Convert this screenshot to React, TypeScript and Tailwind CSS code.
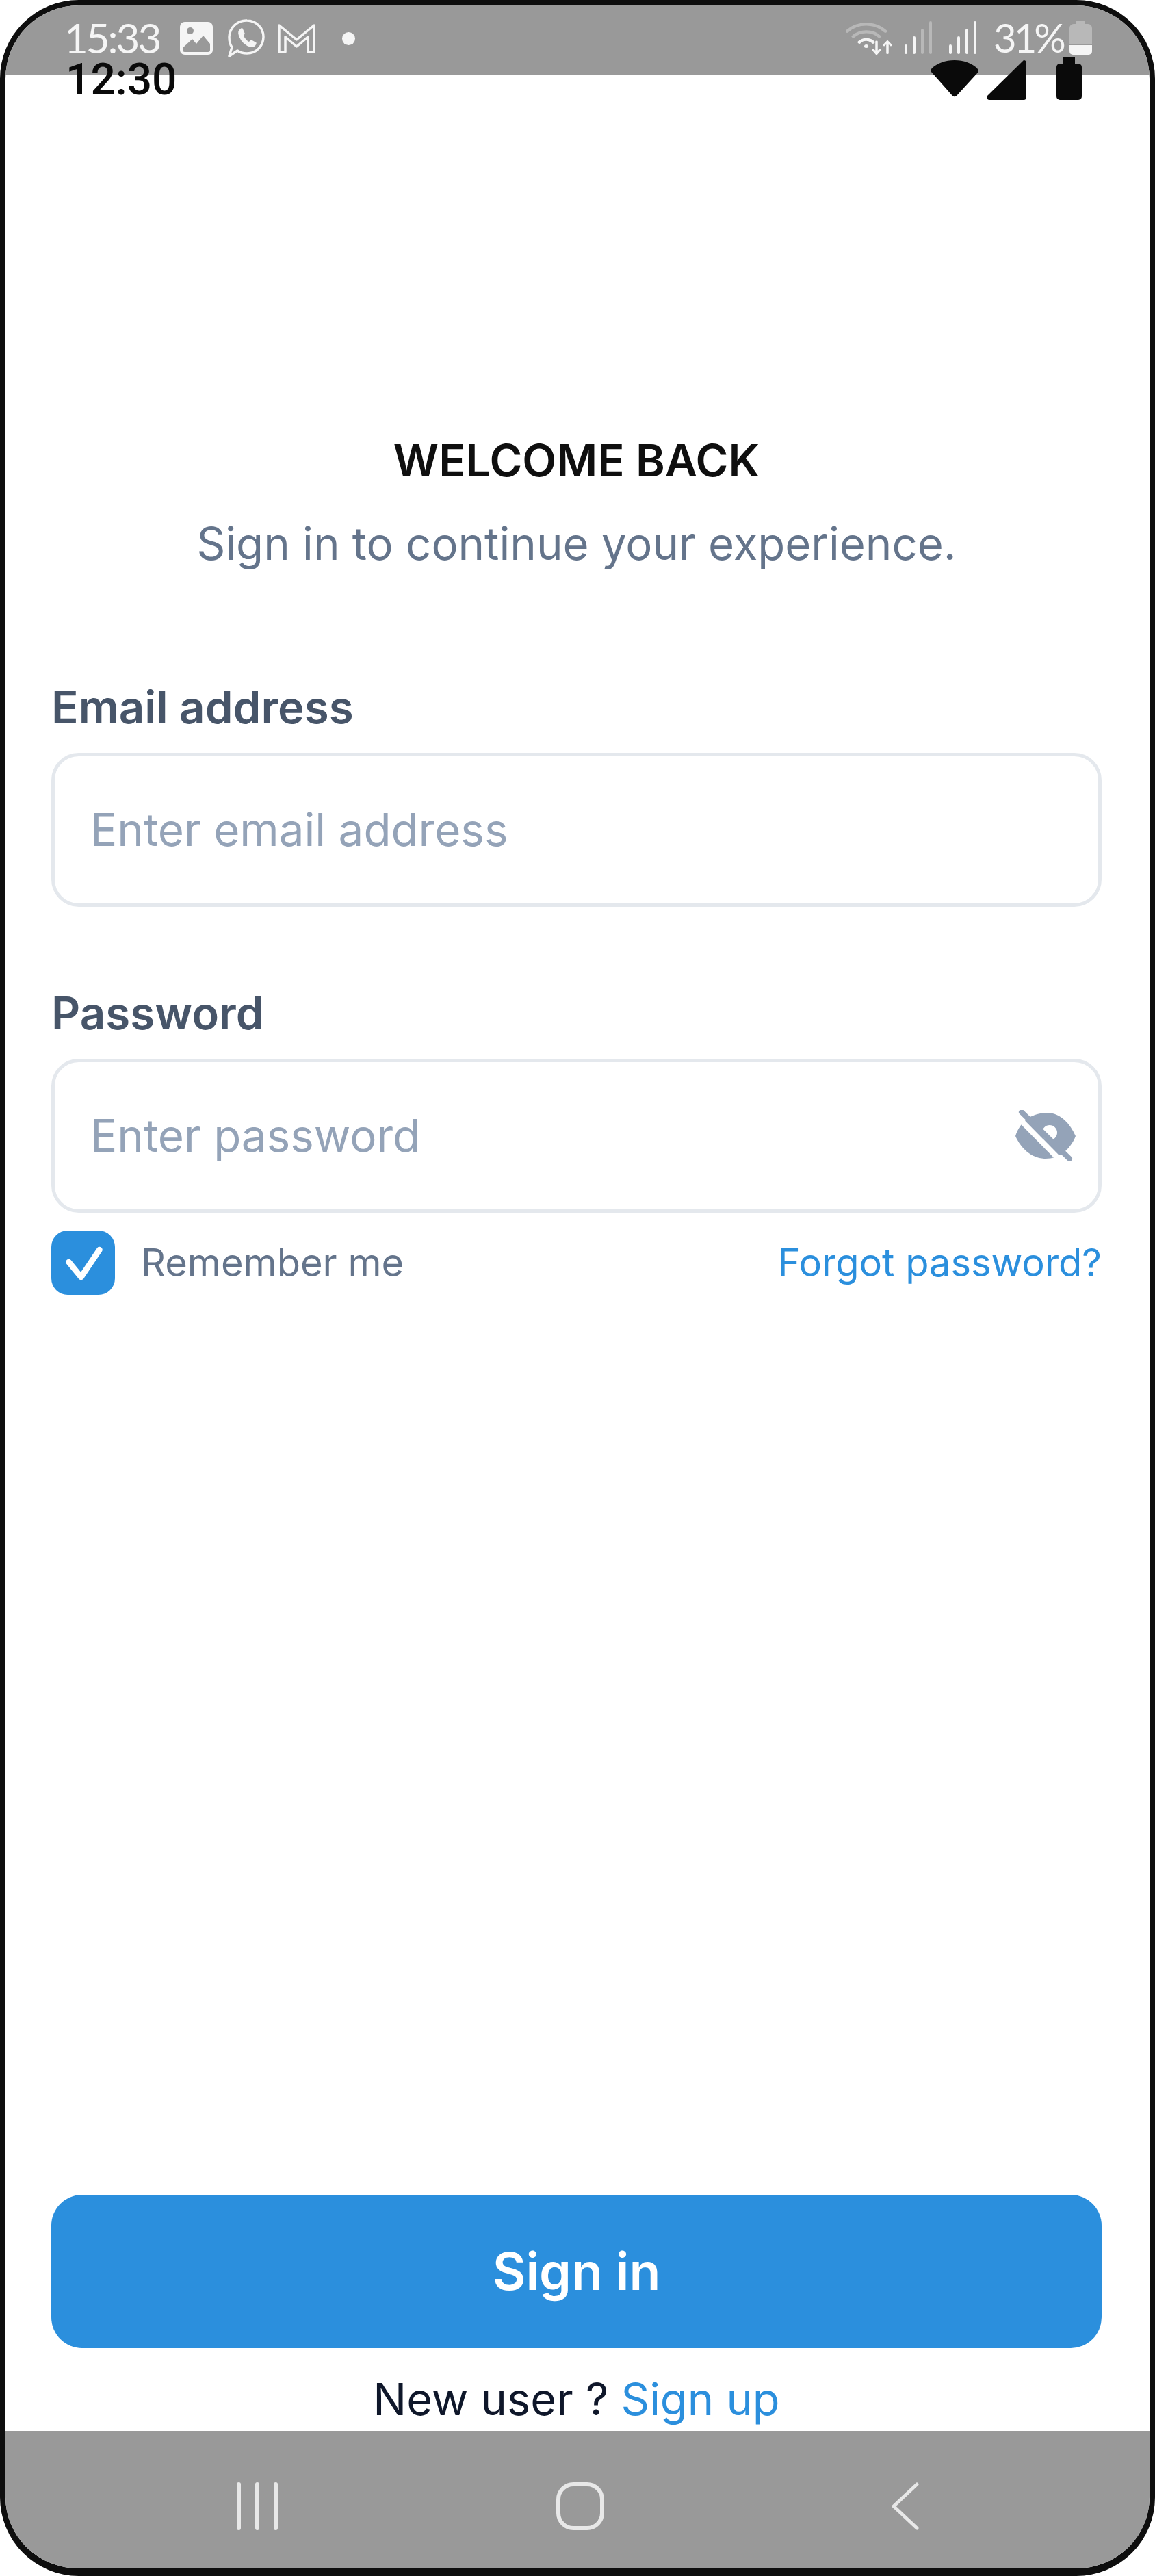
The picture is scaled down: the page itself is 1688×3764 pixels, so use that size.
function ImageIcon() {
  return (
    <svg viewBox="0 0 48 48" className="w-[48px] h-[48px]">
      <path fill="#f5f5f5" fillRule="evenodd" d="M7 0h34a7 7 0 0 1 7 7v34a7 7 0 0 1-7 7H7a7 7 0 0 1-7-7V7a7 7 0 0 1 7-7zM4 38v3a3 3 0 0 0 3 3h34a3 3 0 0 0 3-3v-9L34 20 24 32l-6-7z" />
      <circle cx="15" cy="13" r="5" fill="#999999" />
    </svg>
  );
}

function WhatsAppIcon() {
  return (
    <svg viewBox="0 0 54 56" className="w-[54px] h-[56px]" fill="none" stroke="#f5f5f5" strokeWidth="3.500" strokeLinejoin="round">
      <path d="M28 2a24 24 0 0 1 0 48c-5 0-10-1-14-4L2 54l4-13C3 37 2 31 2 26A25 25 0 0 1 28 2z" />
      <path fill="#f5f5f5" strokeWidth="1.500" d="M20 14c-4 2-5 6-3 11 3 7 9 13 16 15 4 1 7-1 8-5l-7-4-3 3c-4-2-7-6-9-10l2-3-3-7z" />
    </svg>
  );
}

function GmailIcon() {
  return (
    <svg viewBox="0 0 55 43" className="w-[55px] h-[43px]" fill="none" stroke="#f5f5f5" strokeWidth="3.500" strokeLinejoin="round">
      <path d="M2 41V2l25.500 21L53 2v39h-9V19L27.500 33 11 19v22z" />
    </svg>
  );
}

function WifiSmall() {
  return (
    <svg viewBox="0 0 75 62" preserveAspectRatio="none" className="w-[75px] h-[52px]" fill="none" strokeLinecap="round">
      <path d="M2 20a38 38 0 0 1 56 0" stroke="#b8b8b8" strokeWidth="5" />
      <path d="M11 29a26 26 0 0 1 38 0" stroke="#b8b8b8" strokeWidth="5" />
      <path d="M20 39a13 13 0 0 1 20 0" stroke="#f5f5f5" strokeWidth="5" />
      <circle cx="30" cy="46" r="3" fill="#f5f5f5" />
      <path d="M45 38v20M40 52l5 7 5-7M61 58V38M56 44l5-6 5 6" stroke="#f5f5f5" strokeWidth="3.500" />
    </svg>
  );
}

function SignalBars({ dim }: { dim: boolean }) {
  return (
    <svg viewBox="0 0 42 48" className="w-[42px] h-[48px]" fill="none" strokeLinecap="round" strokeWidth="4">
      <path d="M3 46v-10" stroke="#f5f5f5" />
      <path d="M15 46V24" stroke="#f5f5f5" />
      <path d="M27 46V13" stroke={dim ? "#b8b8b8" : "#f5f5f5"} />
      <path d="M39 46V2" stroke={dim ? "#b8b8b8" : "#f5f5f5"} />
    </svg>
  );
}

function BatterySmall() {
  return (
    <svg viewBox="0 0 33 50" className="w-[33px] h-[50px]">
      <path fill="#b8b8b8" d="M10 0h13v5h4a6 6 0 0 1 6 6v24H0V11a6 6 0 0 1 6-6h4z" />
      <path fill="#f5f5f5" d="M0 36h33v9a5 5 0 0 1-5 5H5a5 5 0 0 1-5-5z" />
    </svg>
  );
}

function EyeOff() {
  return (
    <svg viewBox="0 0 88 75" className="w-[88px] h-[75px] shrink-0">
      <path fill="#94a3b8" fillRule="evenodd" d="M0 38C8 14 26 4 46 4c20 0 34 16 42 34-8 20-24 33-44 33C24 71 8 56 0 38zM50 22a11 11 0 1 0 0 22 11 11 0 1 0 0-22z" />
      <path stroke="#ffffff" strokeWidth="8" d="M1 8 70 78" />
      <path stroke="#94a3b8" strokeWidth="8" strokeLinecap="round" d="M9 3 79 71" />
    </svg>
  );
}

function Field({ label, placeholder, icon }: { label: string; placeholder: string; icon?: boolean }) {
  return (
    <div className="flex flex-col">
      <div className="text-[#475569] text-[65.500px] leading-[80px] font-semibold">{label}</div>
      <div className="mt-[26px] h-[225px] rounded-[40px] border-[5px] border-[#e4e8ed] flex items-center justify-between pl-[52px] pr-[33px]">
        <span className="text-[#94a3b8] text-[65.500px] leading-[80px]">{placeholder}</span>
        {icon && <EyeOff />}
      </div>
    </div>
  );
}

export default function App() {
  return (
    <div className="relative w-[1688px] h-[3764px] bg-white overflow-hidden font-['Inter',sans-serif]">
      <div className="relative w-full h-full flex flex-col rounded-[115px] border-[8px] border-b-[11px] border-[#0e0e0e] overflow-hidden bg-white">
        <header className="h-[101px] shrink-0 bg-[#999999] flex items-start justify-between pl-[86px] pr-[84px] pt-[20px]">
          <div className="flex items-center">
            <span className="w-[169px] mb-[2px] text-[#f5f5f5] text-[60px] leading-[50px] font-['Lato',sans-serif] tracking-[-3px]">15:33</span>
            <ImageIcon />
            <span className="ml-[22px]"><WhatsAppIcon /></span>
            <span className="ml-[19px]"><GmailIcon /></span>
            <span className="ml-[39px] w-[19px] h-[19px] rounded-full bg-[#f5f5f5]" />
          </div>
          <div className="flex items-center mt-[1px]">
            <WifiSmall />
            <span className="ml-[10px]"><SignalBars dim /></span>
            <span className="ml-[23px]"><SignalBars dim={false} /></span>
            <span className="ml-[24px] w-[100px] text-[#f5f5f5] text-[58px] leading-[50px] font-['Lato',sans-serif] tracking-[-4px] whitespace-nowrap">31%</span>
            <span className="ml-[11px]"><BatterySmall /></span>
          </div>
        </header>

        <main className="flex-1 flex flex-col pl-[67px] pr-[70px]">
          <div className="mt-[524px] text-center text-[#0f0f0f] text-[65px] leading-[80px] font-semibold">WELCOME BACK</div>
          <div className="mt-[42px] text-center text-[#64748b] text-[65.300px] leading-[80px]">Sign in to continue your experience.</div>
          <div className="mt-[159px]">
            <Field label="Email address" placeholder="Enter email address" />
          </div>
          <div className="mt-[116px]">
            <Field label="Password" placeholder="Enter password" icon />
          </div>
          <div className="mt-[26px] flex items-center justify-between">
            <div className="flex items-center">
              <span className="w-[93px] h-[94px] rounded-[24px] bg-[#2b8fdd] flex items-center justify-center">
                <svg viewBox="0 0 60 60" className="w-[60px] h-[60px]" fill="none" stroke="#ffffff" strokeWidth="8.500" strokeLinecap="round" strokeLinejoin="round">
                  <path d="M8.500 29 26.500 51 53.500 11" />
                </svg>
              </span>
              <span className="ml-[38px] text-[#64748b] text-[56px] leading-[70px]">Remember me</span>
            </div>
            <span className="text-[#2b8fdd] text-[56px] leading-[70px]">Forgot password?</span>
          </div>
          <div className="mt-auto h-[224px] rounded-[45px] bg-[#2b8fdd] flex items-center justify-center text-white text-[75px] font-semibold">Sign in</div>
          <div className="mt-[35px] mb-[6px] text-center text-[#0f172a] text-[65px] leading-[80px]">New user ? <span className="text-[#2b8fdd]">Sign up</span></div>
        </main>

        <footer className="h-[201px] shrink-0 bg-[#999999] pt-[75px] pl-[337px] flex">
          <svg viewBox="0 0 62 70" className="w-[62px] h-[70px]" fill="none" stroke="#e8e8e8" strokeWidth="6" strokeLinecap="round">
            <path d="M4 3v64M31 3v64M58 3v64" />
          </svg>
          <svg viewBox="0 0 70 70" className="ml-[406px] w-[70px] h-[70px]" fill="none" stroke="#e8e8e8" strokeWidth="6">
            <rect x="3" y="3" width="64" height="64" rx="22" />
          </svg>
          <svg viewBox="0 0 41 70" className="ml-[419px] w-[41px] h-[70px]" fill="none" stroke="#e8e8e8" strokeWidth="5" strokeLinecap="round" strokeLinejoin="round">
            <path d="M38 3 4 35l34 32" />
          </svg>
        </footer>

        <div className="absolute left-0 right-0 top-[72px] flex items-start justify-between pl-[88px] pr-[99px]">
          <span className="mt-[9px] text-[#0a0a0a] text-[64px] leading-[56px] font-medium font-['Roboto',sans-serif]">12:30</span>
          <div className="flex items-start gap-[12px]">
            <svg viewBox="0 0 70 54" className="mt-[8px] w-[70px] h-[54px]" fill="#0a0a0a"><path d="M35 0c13 0 26 4 34 13a5 5 0 0 1 1 4L38 52a4 4 0 0 1-6 0L1 17a5 5 0 0 1 0-4C9 4 22 0 35 0z" /></svg>
            <svg viewBox="0 0 58 58" className="mt-[8px] w-[58px] h-[58px]" fill="#0a0a0a"><path d="M54 0a4 4 0 0 1 4 4v50a4 4 0 0 1-4 4H4c-3 0-5-3-3-6z" /></svg>
            <svg viewBox="0 0 37 62" className="ml-[32px] mt-[4px] w-[37px] h-[62px]" fill="#0a0a0a"><path d="M10 0h17v9h5a5 5 0 0 1 5 5v43a5 5 0 0 1-5 5H5a5 5 0 0 1-5-5V14a5 5 0 0 1 5-5h5z" /></svg>
          </div>
        </div>
      </div>
    </div>
  );
}
